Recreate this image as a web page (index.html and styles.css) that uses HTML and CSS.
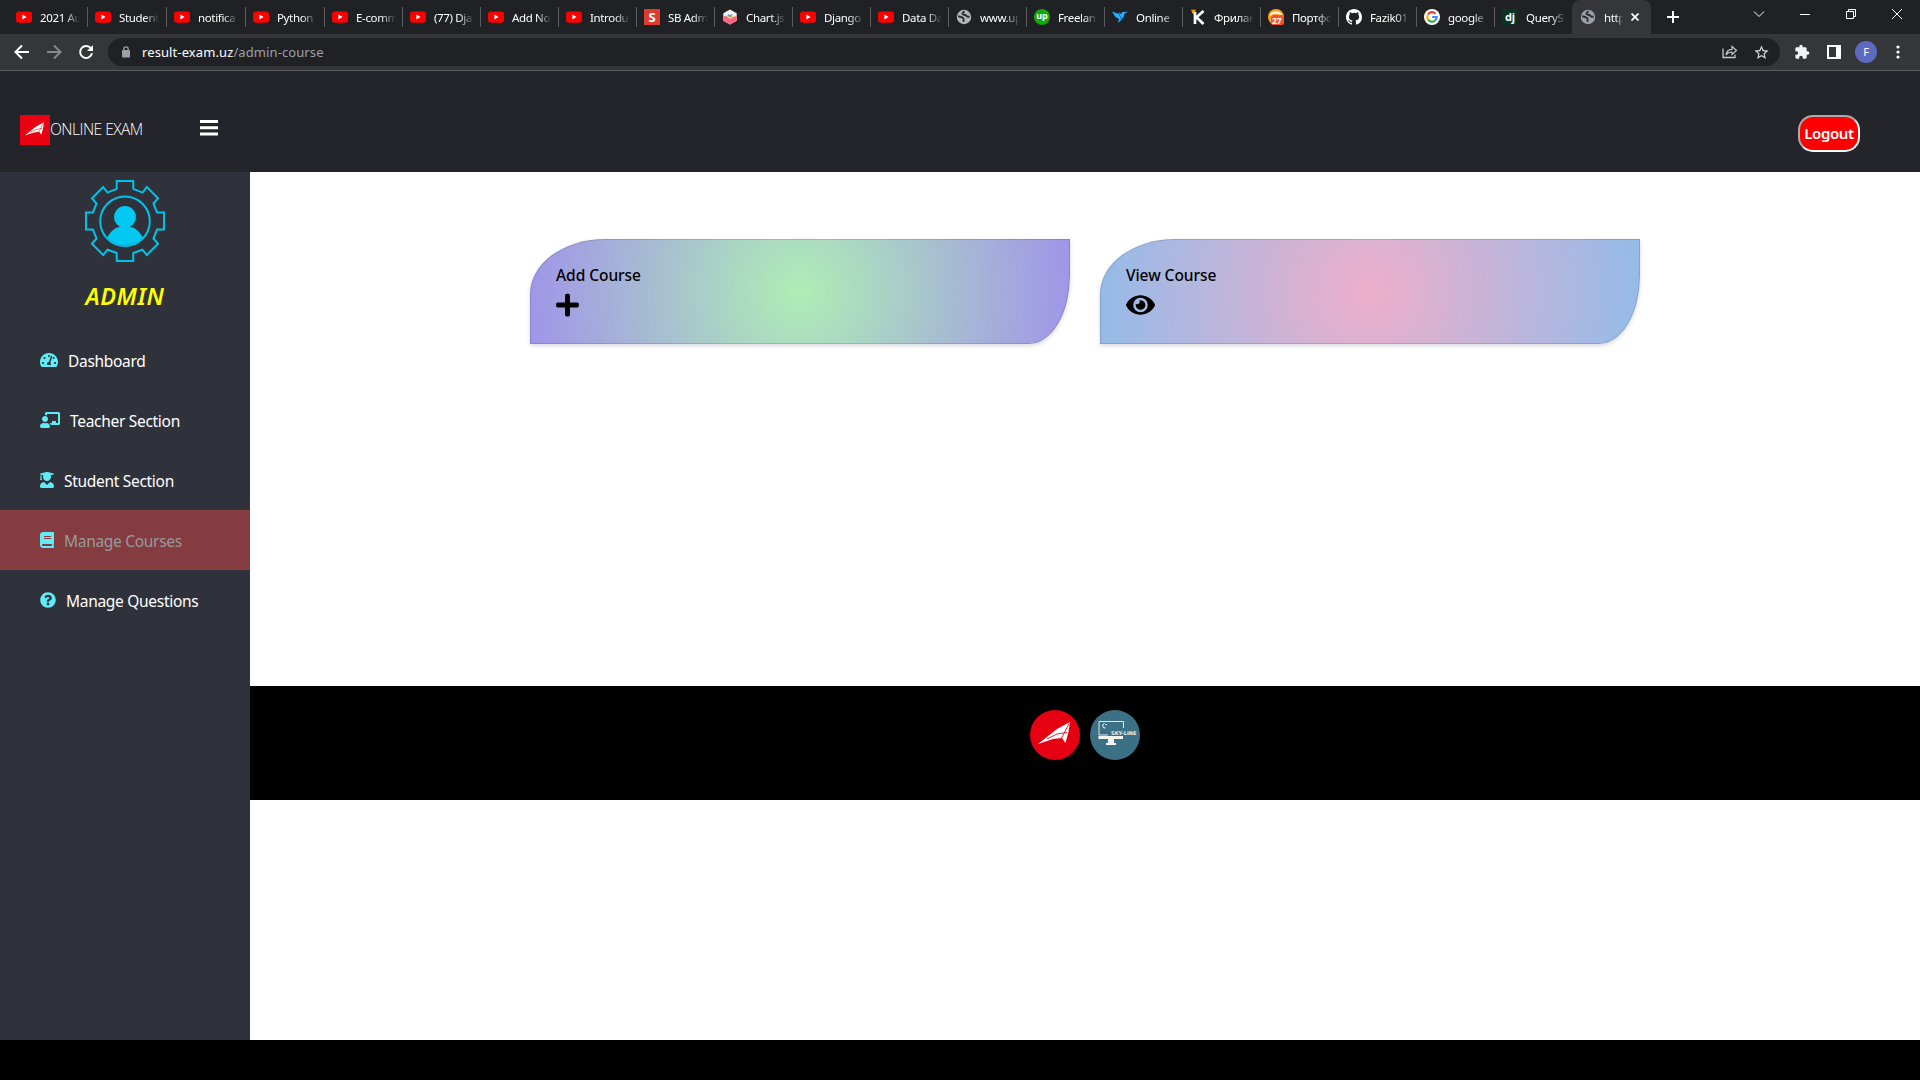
FILE: index.html
```html
<!DOCTYPE html>
<html lang="en">
<head>
<meta charset="utf-8">
<title>Admin - Courses</title>
<link rel="stylesheet" href="styles.css">
</head>
<body>
<svg width="0" height="0" class="defs" aria-hidden="true">
  <symbol id="yt" viewBox="0 0 16 16"><rect y="2.4" width="16" height="11.3" rx="3" fill="#f00"/><path d="M6.4 5.6v4.8l4.1-2.4z" fill="#fff"/></symbol>
  <symbol id="globe" viewBox="0 0 16 16"><circle cx="8" cy="8" r="7.2" fill="currentColor"/><path d="M2.2 7.2c2.300.3 4.200.8 5.100 2 .8 1.100-.4 2 .6 3.500M8.300 2.100c-.6 1.400-2.500 1.600-1.700 2.900.7 1 2.200.4 3.200 1.200 1 .7.800 1.800 3.800 1.600" stroke="#292a2d" stroke-width="1.900" fill="none"/></symbol>
  <symbol id="plane" viewBox="0 0 50 50"><path d="M8 34 27 19 40 12 38.500 22 35.500 33 32 28 23 29z" fill="#fff"/><path d="M17 29 27 24 37 22.500M31.500 28 39.500 13" stroke="#e50914" stroke-width=".9" fill="none"/></symbol>
</svg>

<div class="tabs">
  <div class="tab"><svg class="fav"><use href="#yt"/></svg><span>2021 Au</span></div>
  <div class="tab"><svg class="fav"><use href="#yt"/></svg><span>Student</span></div>
  <div class="tab"><svg class="fav"><use href="#yt"/></svg><span>notifica</span></div>
  <div class="tab"><svg class="fav"><use href="#yt"/></svg><span>Python</span></div>
  <div class="tab"><svg class="fav"><use href="#yt"/></svg><span>E-comm</span></div>
  <div class="tab"><svg class="fav"><use href="#yt"/></svg><span>(77) Dja</span></div>
  <div class="tab"><svg class="fav"><use href="#yt"/></svg><span>Add No</span></div>
  <div class="tab"><svg class="fav"><use href="#yt"/></svg><span>Introdu</span></div>
  <div class="tab"><b class="fav sb">S</b><span>SB Adm</span></div>
  <div class="tab"><svg class="fav" viewBox="0 0 16 16"><path d="M8 .5l6.700 3.800v7.400L8 15.500 1.300 11.700V4.300z" fill="#f3f1f1"/><path d="M1.300 7.500l3.200-.5L8 10l3-2 3.700-1v4.700L8 15.500 1.300 11.700z" fill="#ff6384"/><path d="M4.500 6.500 8 9l3.500-2" stroke="#fc3" stroke-width="1.300" fill="none"/><path d="M6 5.500l2 2 2-2" stroke="#36a2eb" stroke-width="1.500" fill="none"/></svg><span>Chart.js</span></div>
  <div class="tab"><svg class="fav"><use href="#yt"/></svg><span>Django</span></div>
  <div class="tab"><svg class="fav"><use href="#yt"/></svg><span>Data Da</span></div>
  <div class="tab"><svg class="fav gl"><use href="#globe"/></svg><span>www.up</span></div>
  <div class="tab"><b class="fav up">up</b><span>Freelan</span></div>
  <div class="tab"><svg class="fav" viewBox="0 0 16 16"><path d="M0 2.500 6.500 5 7 3.500 9 5l1.500-2L16 2.800 12.500 4.500 11 9.500 6 14l1-4L3.500 8z" fill="#29b2fe"/><path d="M7 3.500l1 4 3 2-3 .5" stroke="#126ea6" fill="none"/></svg><span>Online</span></div>
  <div class="tab"><svg class="fav" viewBox="0 0 16 16"><path d="M1 .8h5L3.500 5.500 2.300 4z" fill="#ff9d00"/><path d="M5 3v12M13.500 2 6.500 8.300 13.500 15" stroke="#fff" stroke-width="2.700" fill="none"/></svg><span>Фрилан</span></div>
  <div class="tab"><svg class="fav" viewBox="0 0 16 16"><circle cx="8" cy="8" r="8" fill="#ffa319"/><path d="M3 6.500C4 2.500 12 2.500 13 6.500" stroke="#fff" stroke-width="2" fill="none"/><rect x="3" y="6" width="13" height="10" rx="2" fill="#f2542d"/><text x="4" y="14.500" class="t27">27</text></svg><span>Портфо</span></div>
  <div class="tab"><svg class="fav" viewBox="0 0 16 16"><path fill="#fff" d="M8 0C3.580 0 0 3.580 0 8c0 3.540 2.290 6.530 5.470 7.590.4.070.55-.17.55-.38 0-.19-.010-.82-.010-1.490-2.010.37-2.530-.49-2.690-.94-.09-.23-.48-.94-.82-1.130-.28-.15-.68-.52-.010-.53.63-.010 1.080.58 1.230.82.72 1.210 1.870.87 2.330.66.070-.52.28-.87.51-1.070-1.780-.2-3.640-.89-3.640-3.950 0-.87.310-1.590.82-2.150-.08-.2-.36-1.020.08-2.120 0 0 .67-.21 2.200.82a7.600 7.600 0 0 1 4 0c1.530-1.040 2.200-.82 2.200-.82.44 1.100.16 1.920.08 2.120.51.56.82 1.270.82 2.150 0 3.070-1.870 3.750-3.650 3.950.29.25.54.73.54 1.480 0 1.070-.010 1.930-.010 2.200 0 .21.15.46.55.38A8 8 0 0 0 16 8c0-4.420-3.580-8-8-8z"/></svg><span>Fazik01</span></div>
  <div class="tab"><svg class="fav" viewBox="0 0 16 16"><circle cx="8" cy="8" r="8" fill="#fff"/><g fill="none" stroke-width="2.200"><path d="M11.500 4.700A4.700 4.700 0 0 0 4 5.500" stroke="#ea4335"/><path d="M4 5.500a4.700 4.700 0 0 0 0 5" stroke="#fbbc05"/><path d="M4 10.500a4.700 4.700 0 0 0 7.200 1" stroke="#34a853"/><path d="M11.200 11.500A4.700 4.700 0 0 0 12.700 8H8.200" stroke="#4285f4"/></g></svg><span>google</span></div>
  <div class="tab last"><b class="fav dj">dj</b><span>QueryS</span></div>
  <div class="tab active"><svg class="fav gl2"><use href="#globe"/></svg><span>http</span><svg class="x" viewBox="0 0 8 8"><path d="M.5.5l7 7M7.500.5l-7 7" stroke="#fff" stroke-width="1.700"/></svg></div>
  <svg class="plus" viewBox="0 0 12 12"><path d="M6 0v12M0 6h12" stroke="#fff" stroke-width="2"/></svg>
  <div class="win">
    <svg viewBox="0 0 10 10"><path d="M0 2.500l5 5 5-5"/></svg>
    <svg viewBox="0 0 10 10"><path d="M0 5.500h10"/></svg>
    <svg viewBox="0 0 10 10"><path d="M.5 2.500h7v7h-7zM2.500 2.500v-2h7v7h-2"/></svg>
    <svg viewBox="0 0 10 10"><path d="M0 0l10 10M10 0L0 10"/></svg>
  </div>
</div>

<div class="toolbar">
  <svg class="nav-i" viewBox="0 0 16 16"><path d="M15 8H2M8 1.500 1.500 8 8 14.500" fill="none" stroke="#fff" stroke-width="2"/></svg>
  <svg class="nav-i" viewBox="0 0 16 16"><path d="M1 8h13M8 1.500 14.500 8 8 14.500" fill="none" stroke="#85878b" stroke-width="2"/></svg>
  <svg class="nav-i" viewBox="0 0 16 16"><path d="M13 4.500A6 6 0 1 0 14 9.300" fill="none" stroke="#fff" stroke-width="2"/><path d="M15 1v6H9z" fill="#fff"/></svg>
  <div class="omni">
    <svg class="lock" viewBox="0 0 10 12"><rect x="1" y="4" width="8" height="7.500" rx="1" fill="#9aa0a6"/><path d="M2.800 4.500V3a2.200 2.200 0 0 1 4.400 0v1.500" fill="none" stroke="#9aa0a6" stroke-width="1.300"/></svg>
    <div class="url">result-exam.uz<i>/admin-course</i></div>
    <svg class="share" viewBox="0 0 16 16"><path d="M1 4.500v9h12v-3" fill="none" stroke="#c4c7c5" stroke-width="1.300"/><path d="M4 11c.5-4 3-5.700 6-5.700V2.300L14.500 6.500 10 10.500V8c-2.500 0-4.500.7-6 3z" fill="none" stroke="#c4c7c5" stroke-width="1.200"/></svg>
    <svg class="star" viewBox="0 0 24 24"><path d="M22 9.240l-7.190-.62L12 2 9.190 8.630 2 9.240l5.460 4.730L5.820 21 12 17.270 18.180 21l-1.630-7.030L22 9.240zM12 15.400l-3.760 2.270 1-4.280-3.320-2.880 4.380-.38L12 6.100l1.710 4.040 4.380.38-3.320 2.880 1 4.280L12 15.400z" fill="#dadce0"/></svg>
  </div>
  <svg class="puz" viewBox="0 0 24 24"><path d="M20.500 11H19V7c0-1.100-.9-2-2-2h-4V3.500C13 2.120 11.880 1 10.500 1S8 2.120 8 3.500V5H4c-1.100 0-1.990.9-1.990 2v3.800H3.500c1.490 0 2.700 1.210 2.700 2.700s-1.210 2.700-2.700 2.700H2V20c0 1.100.9 2 2 2h3.800v-1.500c0-1.490 1.210-2.700 2.700-2.700 1.490 0 2.700 1.210 2.700 2.700V22H17c1.100 0 2-.9 2-2v-4h1.500c1.380 0 2.500-1.120 2.500-2.500S21.880 11 20.500 11z" fill="#f1f3f4"/></svg>
  <svg class="panel" viewBox="0 0 14 14"><path d="M1 1h12v12H1z" fill="none" stroke="#fff" stroke-width="2"/><path d="M9 1h4v12H9z" fill="#fff"/></svg>
  <div class="avatar">F</div>
  <svg class="dots" viewBox="0 0 4 14"><g fill="#fff"><circle cx="2" cy="2" r="1.600"/><circle cx="2" cy="7" r="1.600"/><circle cx="2" cy="12" r="1.600"/></g></svg>
</div>

<header class="header">
  <svg class="brand-i" viewBox="0 0 50 50"><path d="M0 0h50v50H0z" fill="#e90011"/><use href="#plane"/></svg>
  <span class="brand">ONLINE EXAM</span>
  <svg class="bars" viewBox="0 0 18 18"><path d="M0 1h18v3H0zM0 7.300h18v3H0zM0 13.600h18v3H0z" fill="#fff"/></svg>
  <button class="logout">Logout</button>
</header>

<div class="body">
  <aside class="side">
    <svg class="gear" viewBox="-121 -124 242 248"><path d="M-25-121H25V-97L53-86 66-103 100-69 86-53 97-26H118V26H97L86 53 100 69 66 103 53 87 25 97V121H-25V97L-53 87-66 103-100 69-86 53-97 26H-118V-26H-97L-86-53-100-69-66-103-53-86-25-97z" fill="none" stroke="#00c3ea" stroke-width="6"/><circle r="75" cy="1" fill="none" stroke="#00c3ea" stroke-width="6"/><circle r="33" cy="-12" fill="#00c8f0"/><path d="M-54 50C-42 27-26 18-15 18H15C26 18 42 27 54 50A75 75 0 0 1-54 50z" fill="#00c8f0"/></svg>
    <h2>ADMIN</h2>
    <nav>
      <a><svg style="width:18px" viewBox="0 0 576 512"><path d="M288 32C128.940 32 0 160.940 0 320c0 52.800 14.250 102.260 39.060 144.800 5.610 9.620 16.300 15.200 27.440 15.200h443c11.140 0 21.830-5.580 27.440-15.200C561.750 422.260 576 372.800 576 320c0-159.060-128.940-288-288-288zm0 64c14.710 0 26.580 10.130 30.320 23.650-1.110 2.260-2.640 4.230-3.450 6.670l-9.220 27.670c-5.130 3.490-10.970 6.010-17.640 6.010-17.670 0-32-14.330-32-32S270.330 96 288 96zM96 384c-17.670 0-32-14.330-32-32s14.330-32 32-32 32 14.330 32 32-14.330 32-32 32zm48-160c-17.670 0-32-14.330-32-32s14.330-32 32-32 32 14.330 32 32-14.330 32-32 32zm246.770-72.410l-61.330 184C343.130 347.330 352 364.540 352 384c0 11.720-3.380 22.550-8.880 32H232.880c-5.500-9.450-8.880-20.280-8.880-32 0-33.940 26.500-61.430 59.900-63.590l61.340-184.010c4.170-12.560 17.730-19.450 30.360-15.170 12.570 4.190 19.350 17.790 15.170 30.360zm14.660 57.200l15.520-46.550c3.470-1.290 7.130-2.230 11.050-2.230 17.670 0 32 14.330 32 32s-14.330 32-32 32c-11.380-.010-20.890-6.280-26.570-15.220zM480 384c-17.670 0-32-14.330-32-32s14.330-32 32-32 32 14.330 32 32-14.330 32-32 32z"/></svg><span>Dashboard</span></a>
      <a><svg style="width:20px" viewBox="0 0 640 512"><path d="M208 352c-2.390 0-4.780.35-7.060 1.090C187.980 357.300 174.350 360 160 360c-14.350 0-27.980-2.700-40.950-6.910-2.280-.74-4.660-1.090-7.050-1.090C49.940 352-.33 402.480 0 464.620.14 490.880 21.730 512 48 512h224c26.270 0 47.860-21.120 48-47.380.33-62.140-49.940-112.620-112-112.620zm-48-32c53.020 0 96-42.980 96-96s-42.980-96-96-96-96 42.980-96 96 42.980 96 96 96zM592 0H208c-26.470 0-48 22.250-48 49.590V96c23.420 0 45.100 6.780 64 17.800V64h352v288h-64v-64H384v64h-76.240c19.100 16.690 33.120 38.730 39.690 64H592c26.470 0 48-22.250 48-49.590V49.590C640 22.250 618.470 0 592 0z"/></svg><span>Teacher Section</span></a>
      <a><svg style="width:14px" viewBox="0 0 448 512"><path d="M319.400 320.600L224 416l-95.400-95.400C57.100 323.700 0 382.200 0 454.400v9.600c0 26.500 21.500 48 48 48h352c26.500 0 48-21.500 48-48v-9.600c0-72.200-57.100-130.700-128.600-133.800zM13.600 79.800l6.400 1.500v58.400c-7 4.200-12 11.500-12 20.300 0 8.400 4.600 15.400 11.100 19.700L3.500 242c-1.700 6.900 2.100 14 7.600 14h41.800c5.500 0 9.300-7.100 7.600-14l-15.600-62.300C51.400 175.400 56 168.400 56 160c0-8.800-5-16.100-12-20.300V87.100l66 15.900c-8.600 17.200-14 36.400-14 57 0 70.700 57.300 128 128 128s128-57.300 128-128c0-20.600-5.300-39.800-14-57l96.300-23.200c18.200-4.400 18.200-27.100 0-31.500l-190.400-46c-13-3.100-26.700-3.100-39.700 0L13.600 48.200c-18.100 4.400-18.100 27.200 0 31.600z"/></svg><span>Student Section</span></a>
      <a class="current"><svg style="width:14px" viewBox="0 0 448 512"><path d="M448 360V24c0-13.300-10.700-24-24-24H96C43 0 0 43 0 96v320c0 53 43 96 96 96h328c13.300 0 24-10.700 24-24v-16c0-7.500-3.500-14.300-8.900-18.700-4.200-15.400-4.200-59.300 0-74.700 5.400-4.300 8.900-11.100 8.900-18.600zM128 134c0-3.300 2.700-6 6-6h212c3.300 0 6 2.700 6 6v20c0 3.300-2.700 6-6 6H134c-3.300 0-6-2.700-6-6v-20zm0 64c0-3.300 2.700-6 6-6h212c3.300 0 6 2.700 6 6v20c0 3.300-2.700 6-6 6H134c-3.300 0-6-2.700-6-6v-20zm253.400 250H96c-17.700 0-32-14.300-32-32 0-17.600 14.400-32 32-32h285.400c-1.900 17.100-1.900 46.900 0 64z"/></svg><span>Manage Courses</span></a>
      <a><svg style="width:16px" viewBox="0 0 512 512"><path d="M504 256c0 136.997-111.043 248-248 248S8 392.997 8 256C8 119.083 119.043 8 256 8s248 111.083 248 248zM262.655 90c-54.497 0-89.255 22.957-116.549 63.758-3.536 5.286-2.353 12.415 2.715 16.258l34.699 26.310c5.205 3.947 12.621 3.008 16.665-2.122 17.864-22.658 30.113-35.797 57.303-35.797 20.429 0 45.698 13.148 45.698 32.958 0 14.976-12.363 22.667-32.534 33.976C247.128 238.528 216 254.941 216 296v4c0 6.627 5.373 12 12 12h56c6.627 0 12-5.373 12-12v-1.333c0-28.462 83.186-29.647 83.186-106.667 0-58.002-60.165-102-116.531-102zM256 338c-25.365 0-46 20.635-46 46 0 25.364 20.635 46 46 46s46-20.636 46-46c0-25.365-20.635-46-46-46z"/></svg><span>Manage Questions</span></a>
    </nav>
  </aside>
  <main class="main">
    <div class="cards">
      <div class="card add"><h6>Add Course</h6><svg class="i-plus" viewBox="0 0 448 512"><path d="M416 208H272V64c0-17.670-14.330-32-32-32h-32c-17.670 0-32 14.330-32 32v144H32c-17.670 0-32 14.330-32 32v32c0 17.670 14.330 32 32 32h144v144c0 17.670 14.330 32 32 32h32c17.670 0 32-14.330 32-32V304h144c17.670 0 32-14.330 32-32v-32c0-17.670-14.330-32-32-32z"/></svg></div>
      <div class="card view"><h6>View Course</h6><svg class="i-eye" viewBox="0 0 576 512"><path d="M572.520 241.400C518.290 135.590 410.930 64 288 64S57.680 135.640 3.480 241.410a32.350 32.350 0 0 0 0 29.190C57.710 376.410 165.070 448 288 448s230.320-71.640 284.520-177.410a32.350 32.350 0 0 0 0-29.190zM288 400a144 144 0 1 1 144-144 143.930 143.930 0 0 1-144 144zm0-240a95.310 95.310 0 0 0-25.310 3.790 47.850 47.850 0 0 1-66.900 66.900A95.780 95.780 0 1 0 288 160z"/></svg></div>
    </div>
    <footer class="footer">
      <svg viewBox="0 0 50 50"><circle cx="25" cy="25" r="25" fill="#e50012"/><use href="#plane"/></svg>
      <svg viewBox="0 0 50 50"><circle cx="25" cy="25" r="25" fill="#3b7085"/><path d="M18 25H9V11.500H33.500V18" fill="none" stroke="#dfe9ec"/><path d="M8.500 26H33v3H8.500zM18 29h6v4h2v2H16v-2h2z" fill="#f4f4f4"/><path d="M14.500 13.500a2.300 2.300 0 1 0 1 4.500" fill="none" stroke="#fff"/><path d="M15.500 14.500h1.500" stroke="#fff"/><text x="21" y="25" class="sky" textLength="25.500">SKY-LINE</text></svg>
    </footer>
  </main>
</div>
</body>
</html>
```
FILE: styles.css
```css
* { box-sizing: border-box; }
body {
  margin: 0;
  width: 1920px;
  height: 1080px;
  overflow: hidden;
  background: #000;
  font-family: "Noto Sans", "Open Sans", sans-serif;
  display: flex;
  flex-direction: column;
}
svg { display: block; flex: none; }
.defs { position: absolute; }

/* browser tabs */
.tabs {
  flex: none;
  height: 34px;
  padding-left: 9px;
  background: #202124;
  display: flex;
}
.tab {
  flex: none;
  width: 78px;
  height: 34px;
  padding-left: 7px;
  display: flex;
  align-items: center;
  gap: 8px;
  color: #fff;
  font-size: 11.500px;
  letter-spacing: -0.35px;
  background: linear-gradient(#5b5d61, #5b5d61) right 7px / 1px 20px no-repeat;
}
.tab:nth-child(-n+4) { width: 79px; }
.tab span {
  width: 40px;
  white-space: nowrap;
  -webkit-mask-image: linear-gradient(90deg, #000 62%, transparent);
  mask-image: linear-gradient(90deg, #000 62%, transparent);
}
.tab.last { width: 77px; background: none; }
.tab.active {
  width: 79px;
  padding-left: 8px;
  background: #35363a;
  border-radius: 8px 8px 0 0;
}
.tab.active span { width: 19px; }
.fav { flex: none; width: 16px; height: 16px; text-align: center; letter-spacing: 0; }
.gl { color: #b4b6b8; }
.gl2 { color: #9aa0a6; }
.sb { background: #dd3d31; font-size: 13px; line-height: 16px; }
.up { background: #14a800; border-radius: 50%; font-size: 9px; line-height: 14px; }
.dj { background: #0c3125; font-size: 11px; line-height: 15px; }
.t27 { font: bold 8.500px "Noto Sans", sans-serif; fill: #fff; }
.x { width: 8px; height: 8px; }
.plus { width: 12px; height: 12px; margin: 11px 0 0 16px; }
.win { margin-left: auto; display: flex; gap: 36px; padding: 9px 18px 0 0; }
.win svg { width: 10px; height: 10px; fill: none; stroke: #fff; overflow: visible; }

/* address bar */
.toolbar {
  flex: none;
  height: 37px;
  padding-left: 14px;
  background: #35363a;
  border-bottom: 1px solid #5c5e62;
  display: flex;
  align-items: center;
}
.nav-i { width: 16px; height: 16px; margin-right: 16px; }
.omni {
  width: 1672px;
  height: 28px;
  margin-left: -2px;
  border-radius: 14px;
  background: #202124;
  display: flex;
  align-items: center;
  padding-left: 13px;
}
.lock { width: 10px; height: 12px; }
.url { margin-left: 11px; color: #fff; font-size: 13px; letter-spacing: 0.1px; }
.url i { color: #9aa0a6; font-style: normal; }
.share { width: 16px; height: 16px; margin-left: auto; }
.star { width: 17px; height: 17px; margin: 0 10px 0 15px; }
.puz { width: 16px; height: 16px; margin-left: 14px; }
.panel { width: 14px; height: 14px; margin-left: 17px; }
.avatar {
  width: 22px; height: 22px; margin-left: 14px;
  border-radius: 50%; background: #5c6bc0; color: #fff;
  font-size: 11px; line-height: 22px; text-align: center;
}
.dots { width: 4px; height: 14px; margin-left: 19px; }

/* page header */
.header {
  flex: none;
  height: 101px;
  padding: 44px 60px 0 20px;
  background: #24252a;
  display: flex;
  align-items: flex-start;
}
.brand-i { width: 30px; height: 30px; }
.brand {
  width: 150px;
  color: #fff;
  font: 300 15.500px/28px "Open Sans", sans-serif;
  letter-spacing: -0.5px;
}
.bars { width: 18px; height: 18px; margin-top: 4px; }
.logout {
  width: 62px;
  height: 37px;
  margin-left: auto;
  padding: 0 0 2px;
  border: 2px inset #fff;
  border-radius: 15px;
  background: #f00;
  color: #fff;
  font: 600 15px/20px "Noto Sans", sans-serif;
  letter-spacing: -0.4px;
}

.body { flex: none; height: 868px; display: flex; }
.side { width: 250px; background: #2f323a; padding-top: 8px; }
.gear { width: 80px; height: 82px; margin: 0 auto; }
.side h2 {
  margin: 16px 0 0;
  height: 36px;
  color: #ff0;
  text-align: center;
  font: italic 600 23.500px/36px "Noto Sans", sans-serif;
  letter-spacing: 0.6px;
}
.side nav { margin-top: 16px; }
.side a {
  height: 60px;
  padding-left: 40px;
  display: flex;
  align-items: center;
  gap: 10px;
  color: #fff;
  font-size: 15.500px;
  letter-spacing: -0.3px;
}
.side a svg { height: 16px; fill: #5eedf7; }
.side a span { padding-top: 1px; }
.side a.current { background: #843c41; color: #999; }

.main { flex: 1; background: #fff; }
.cards { height: 514px; padding: 67px 0 0 280px; display: flex; gap: 30px; }
.card {
  width: 540px;
  height: 105px;
  padding: 25px 25px;
  border: 1px solid rgba(0, 0, 0, .125);
  border-radius: 75px 0 41px 0 / 55px 0 68px 0;
  box-shadow: 0 2px 4px rgba(0, 0, 50, .15);
}
.add { background: radial-gradient(circle, #aeeeb5, #a094e9) border-box; }
.view { background: radial-gradient(circle, #eeaeca, #94bbe9) border-box; }
.card h6 { margin: 0; font-size: 15.500px; font-weight: 500; line-height: 20px; letter-spacing: -0.05px; }
.card svg { height: 26px; margin-top: 7px; }
.i-plus { width: 23px; }
.i-eye { width: 29px; }

.footer {
  height: 114px;
  padding-top: 24px;
  background: #000;
  display: flex;
  justify-content: center;
  gap: 10px;
}
.footer svg { width: 50px; height: 50px; }
.sky { font: bold 5px "DejaVu Sans", sans-serif; fill: #e8f0f2; }
```
